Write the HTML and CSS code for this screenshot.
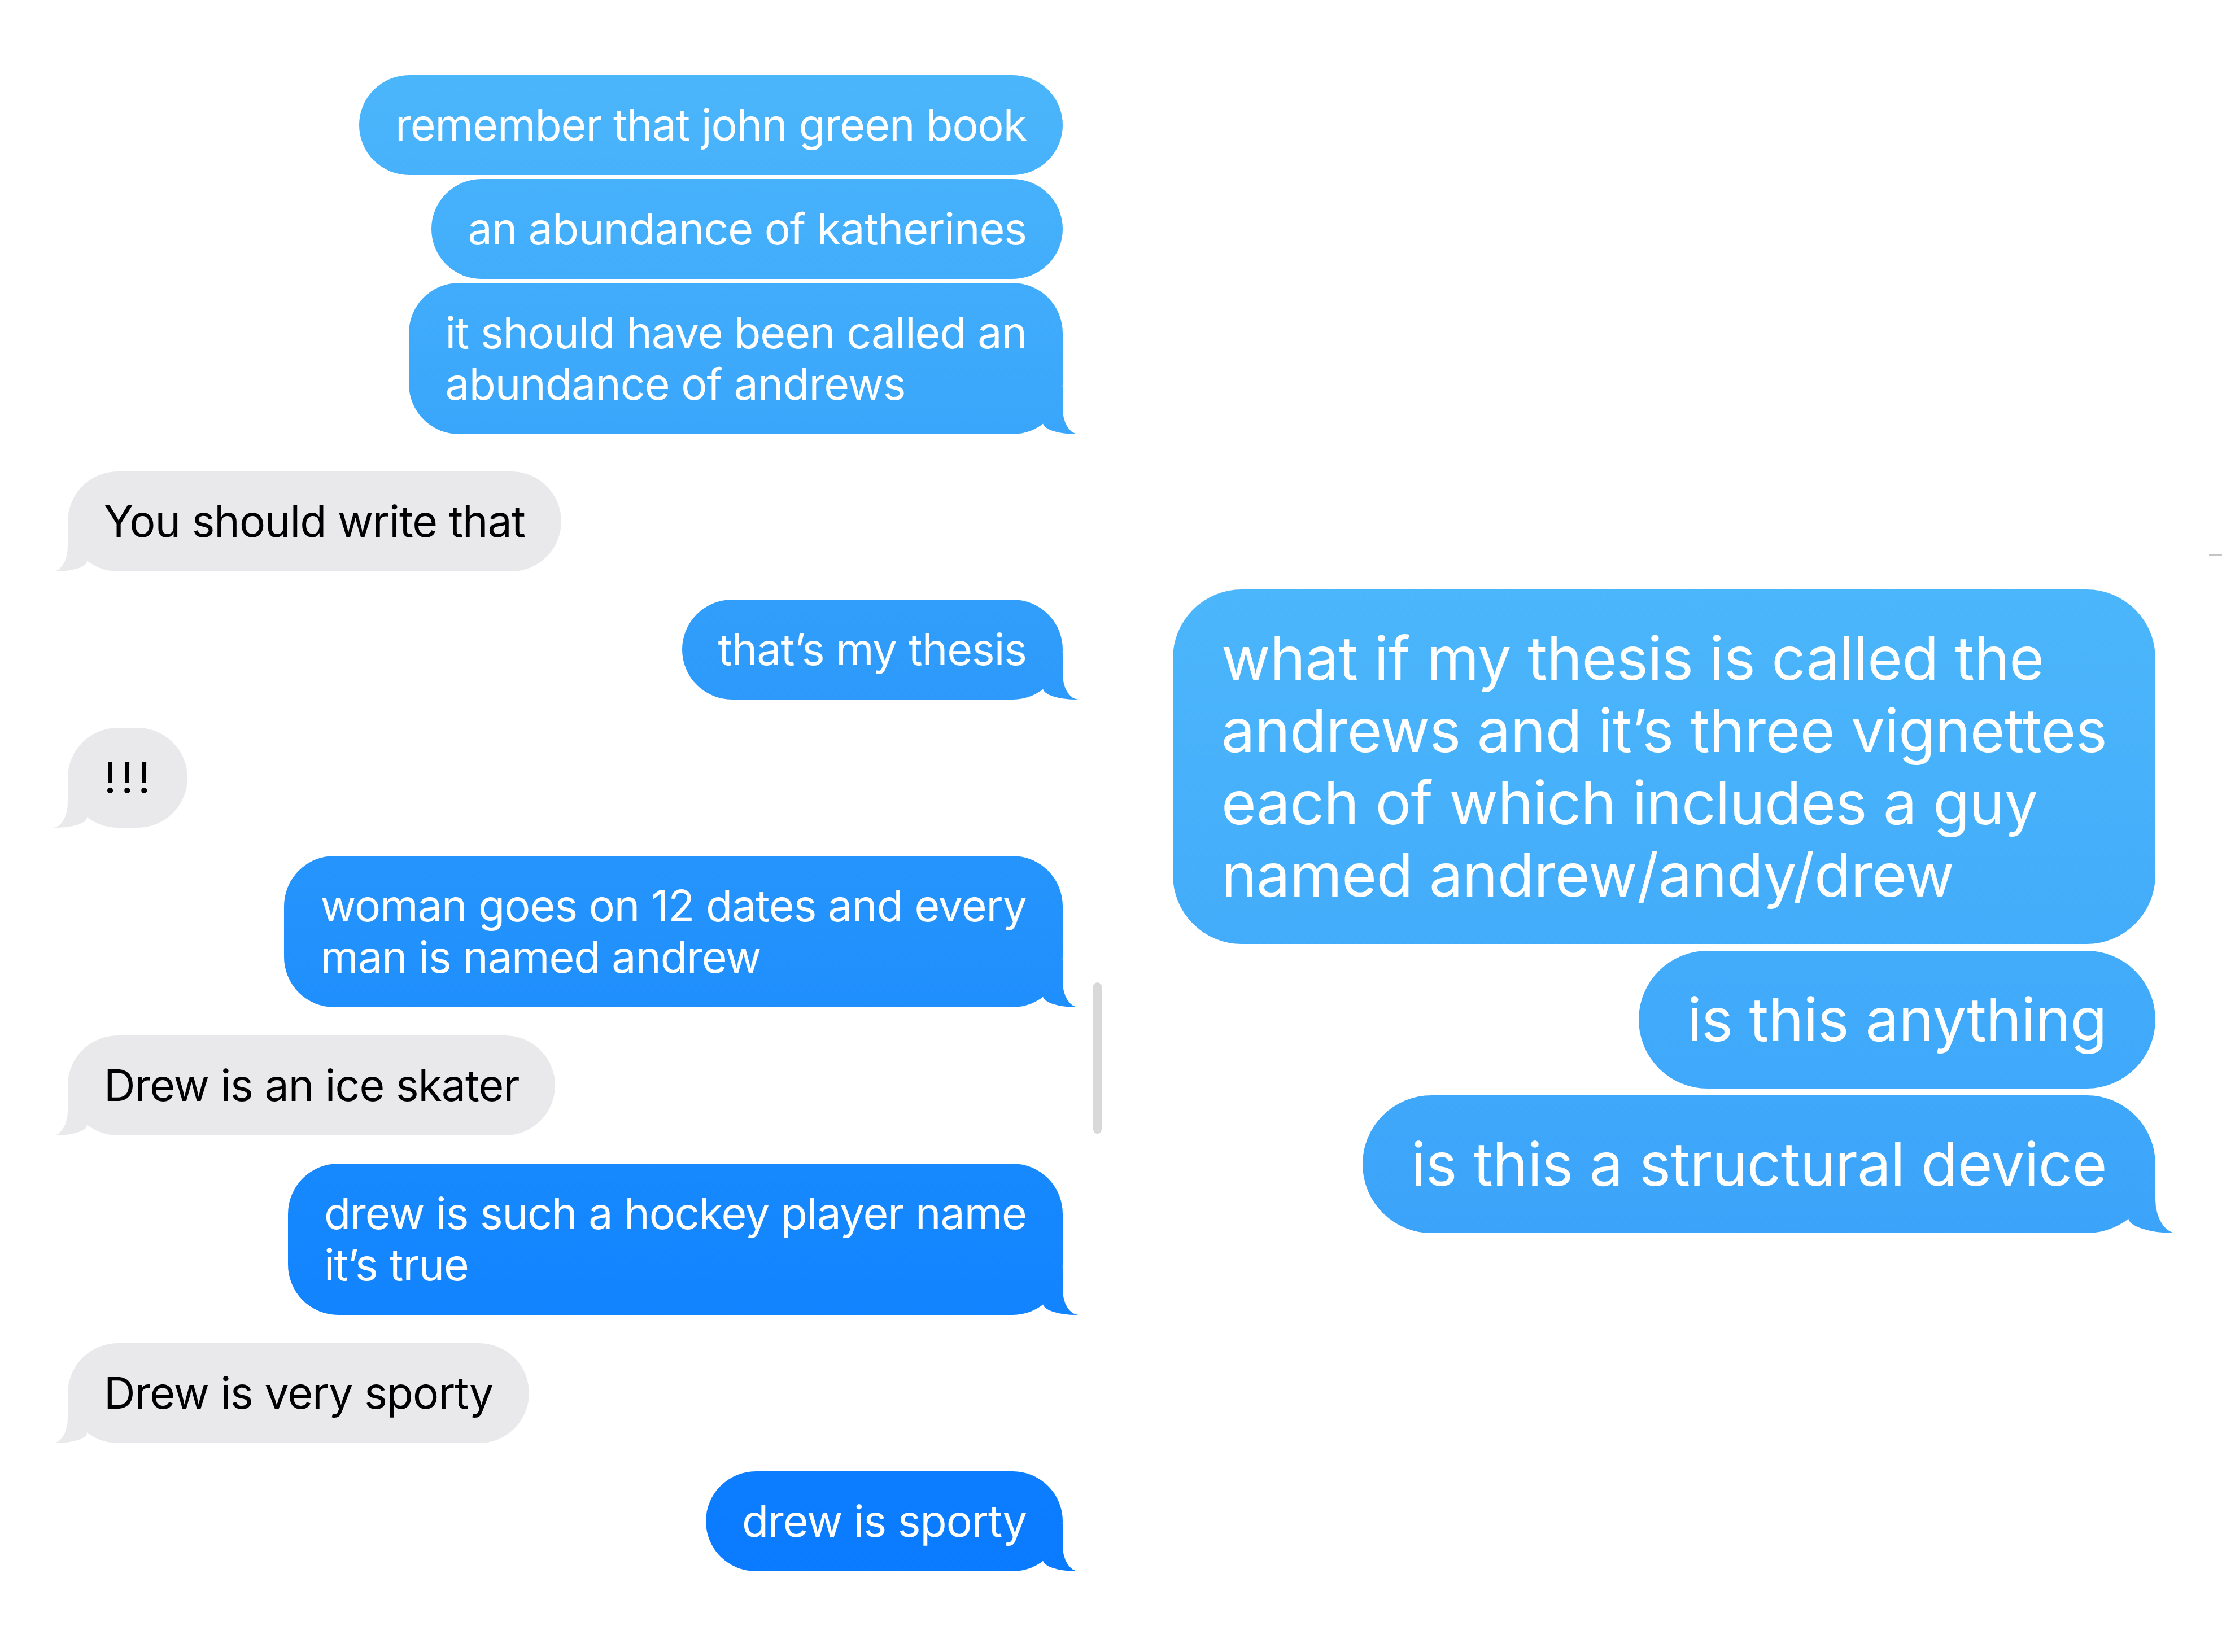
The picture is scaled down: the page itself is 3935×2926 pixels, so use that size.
FILE: index.html
```html
<!DOCTYPE html>
<html lang="en">
<head>
<meta charset="utf-8">
<title>Messages</title>
<link rel="stylesheet" href="styles.css">
</head>
<body>
<div class="page">
  <div class="thread thread-left">
    <div class="msg sent">remember that john green book</div>
    <div class="msg sent cont">an abundance of katherines</div>
    <div class="msg sent cont tail">it should have been called an<br>abundance of andrews</div>
    <div class="msg recv tail gap-lg">You should write that</div>
    <div class="msg sent tail">that’s my thesis</div>
    <div class="msg recv tail bang">!!!</div>
    <div class="msg sent tail">woman goes on 12 dates and every<br>man is named andrew</div>
    <div class="msg recv tail">Drew is an ice skater</div>
    <div class="msg sent tail">drew is such a hockey player name<br>it’s true</div>
    <div class="msg recv tail">Drew is very sporty</div>
    <div class="msg sent tail">drew is sporty</div>
  </div>
  <div class="thread thread-right">
    <div class="msg sent big">what if my thesis is called the<br>andrews and it’s three vignettes<br>each of which includes a guy<br>named andrew/andy/drew</div>
    <div class="msg sent big cont">is this anything</div>
    <div class="msg sent big cont tail">is this a structural device</div>
  </div>
  <div class="scrollbar"></div>
  <div class="edge-mark"></div>
</div>
</body>
</html>
```

FILE: styles.css
```css
* { box-sizing: border-box; }
html, body { margin: 0; padding: 0; background: #ffffff; }
body {
  font-family: Inter, "Noto Sans", "Liberation Sans", sans-serif;
  width: 3935px;
  height: 2926px;
  overflow: hidden;
}
.page {
  position: relative;
  display: grid;
  grid-template-columns: 1762px 1752px;
  column-gap: 183px;
  padding: 133px 0 0 120px;
  height: 2926px;
}
.thread {
  display: flex;
  flex-direction: column;
}
.thread-right { padding-top: 911px; }

.msg {
  position: relative;
  font-size: 77px;
  line-height: 91px;
  letter-spacing: -1px;
  padding: 43px 64px;
  border-radius: 89px;
  margin-top: 50px;
  white-space: nowrap;
}
.thread .msg:first-child { margin-top: 0; }
.msg.cont { margin-top: 7px; }
.msg.gap-lg { margin-top: 66px; }
.msg.bang { letter-spacing: 8px; padding-right: 58px; }

.sent {
  align-self: flex-end;
  color: #ffffff;
  background: linear-gradient(to bottom, #4cb6fb 130px, #2f9cfb 1150px, #1486fe 2200px, #0a7aff 2790px) fixed;
}
.recv {
  align-self: flex-start;
  color: #000000;
  background: #e9e9eb;
}

/* bubble tails */
.tail::before, .tail::after {
  content: "";
  position: absolute;
  bottom: 0;
  height: 83px;
}
.sent.tail::before {
  right: -28px;
  width: 63px;
  border-bottom-left-radius: 60px 20px;
  background: inherit;
}
.sent.tail::after {
  right: -36px;
  width: 36px;
  background: #ffffff;
  border-bottom-left-radius: 28px 45px;
}
.recv.tail::before {
  left: -26px;
  width: 60px;
  border-bottom-right-radius: 57px 18px;
  background: inherit;
}
.recv.tail::after {
  left: -36px;
  width: 36px;
  background: #ffffff;
  border-bottom-right-radius: 26px 45px;
}

/* right, larger screenshot */
.big {
  font-size: 106px;
  line-height: 128px;
  letter-spacing: -0.6px;
  padding: 58px 86px;
  border-radius: 122px;
  background: linear-gradient(to bottom, #4cb6fb 1040px, #3ba4fa 2190px) fixed;
}
.big.cont { margin-top: 12px; }
.sent.big.tail::before {
  right: -38px;
  height: 110px;
  width: 86px;
  border-bottom-left-radius: 82px 27px;
}
.sent.big.tail::after {
  right: -50px;
  height: 110px;
  width: 50px;
  border-bottom-left-radius: 38px 60px;
}

.scrollbar {
  position: absolute;
  left: 1936px;
  top: 1740px;
  width: 15px;
  height: 268px;
  border-radius: 8px;
  background: #d9d9d9;
}
.edge-mark {
  position: absolute;
  left: 3912px;
  top: 982px;
  width: 23px;
  height: 3px;
  background: #c4c4c4;
}
```
